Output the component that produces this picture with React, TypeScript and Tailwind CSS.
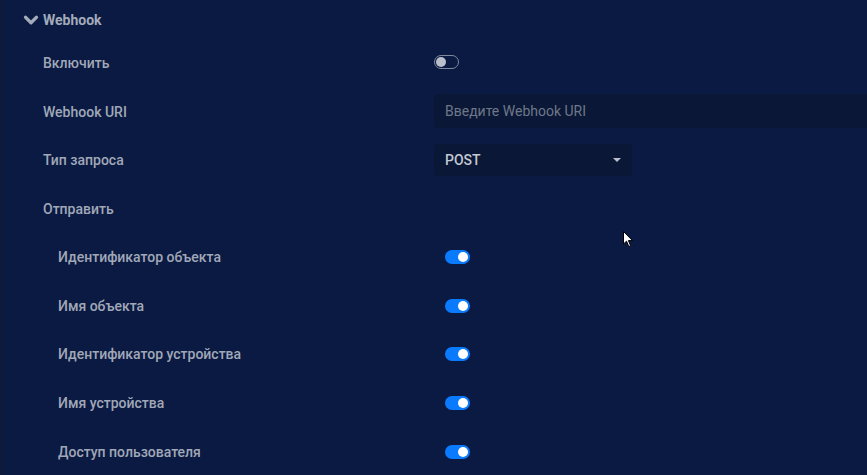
import React from 'react';
import { ChevronDown } from 'lucide-react';

const font = { fontFamily: 'Roboto, "Noto Sans", sans-serif' };

const Toggle = ({ on }: { on: boolean }) =>
  on ? (
    <div className="relative h-[14px] w-[25px] rounded-full bg-[#0a7bff]">
      <div className="absolute right-[2px] top-[2px] h-[10px] w-[10px] rounded-full bg-white" />
    </div>
  ) : (
    <div className="relative h-[14px] w-[25px] rounded-full border border-[#7f889c]">
      <div className="absolute left-[1px] top-[1px] h-[10px] w-[10px] rounded-full bg-[#b9bfcb]" />
    </div>
  );

const subItems = [
  'Идентификатор объекта',
  'Имя объекта',
  'Идентификатор устройства',
  'Имя устройства',
  'Доступ пользователя',
];

export default function App() {
  return (
    <div className="flex h-[475px] w-[867px] overflow-hidden bg-[#0b1a42]" style={font}>
      <div className="w-[4px] shrink-0 bg-[#0d1a3c]" />
      <div className="relative flex-1 pt-[1px]">
        <div className="flex h-[37px] items-center gap-[1px] pl-[16px] text-[14px] font-bold text-[#a3abbb]">
          <ChevronDown size={22} strokeWidth={3.5} />
          <span className="pt-[1px]">Webhook</span>
        </div>

        <div className="flex h-[48.7px] items-center pl-[39px]">
          <div className="w-[391px] pt-[2px] text-[14px] font-medium text-[#a0a8b8]">Включить</div>
          <Toggle on={false} />
        </div>

        <div className="flex h-[48.7px] items-center pl-[39px]">
          <div className="w-[391px] pt-[2px] text-[14px] font-medium text-[#a0a8b8]">Webhook URI</div>
          <div className="flex h-[34px] w-[470px] items-center rounded-[4px] bg-[#0a1736] px-[11px] pt-[1px] text-[14px] text-[#6e7789]">
            Введите Webhook URI
          </div>
        </div>

        <div className="flex h-[48.7px] items-center pl-[39px]">
          <div className="w-[391px] pt-[2px] text-[14px] font-medium text-[#a0a8b8]">Тип запроса</div>
          <div className="flex h-[32px] w-[198px] items-center justify-between rounded-[4px] bg-[#0a1736] pl-[11px] pr-[11px] text-[14px] font-medium text-[#c3c8d2]">
            <span className="pt-[1px]">POST</span>
            <div className="h-0 w-0 border-x-[4px] border-t-[4px] border-x-transparent border-t-[#b9bfcb]" />
          </div>
        </div>

        <div className="flex h-[48.7px] items-center pl-[39px]">
          <div className="w-[391px] pt-[2px] text-[14px] font-medium text-[#a0a8b8]">Отправить</div>
        </div>

        {subItems.map((label) => (
          <div key={label} className="flex h-[48.7px] items-center pl-[54px]">
            <div className="w-[387px] pt-[1px] text-[14px] font-medium text-[#a0a8b8]">{label}</div>
            <Toggle on />
          </div>
        ))}

        <svg className="absolute left-[619px] top-[231px]" width="11" height="17" viewBox="0 0 11 17">
          <path d="M0.5 0.5 L0.5 13 L3.5 10.2 L5.8 15.5 L7.6 14.7 L5.4 9.6 L9.5 9.6 Z" fill="#ffffff" stroke="#000000" strokeWidth="1" />
        </svg>
      </div>
    </div>
  );
}
